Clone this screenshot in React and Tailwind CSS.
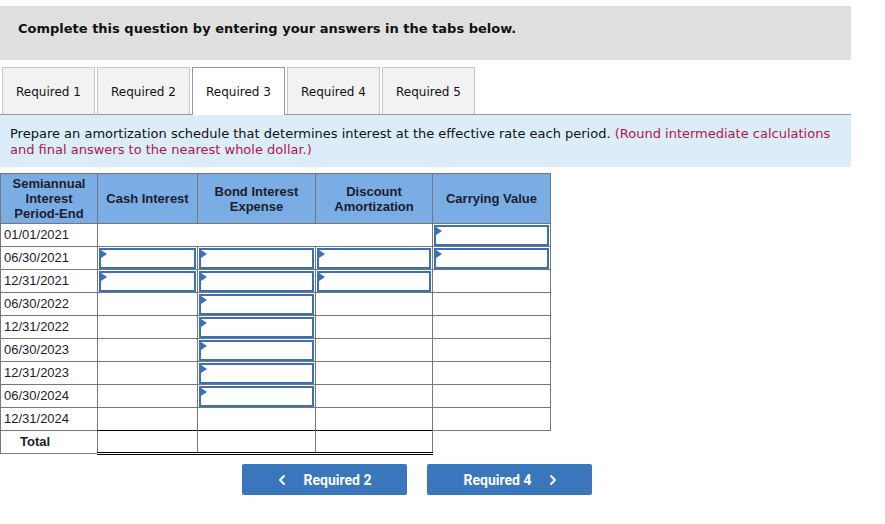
import { ChevronLeft, ChevronRight } from 'lucide-react';

const rows = [
    { date: '01/01/2021', inputs: [false, false, false, true] },
    { date: '06/30/2021', inputs: [true, true, true, true] },
    { date: '12/31/2021', inputs: [true, true, true, false] },
    { date: '06/30/2022', inputs: [false, true, false, false] },
    { date: '12/31/2022', inputs: [false, true, false, false] },
    { date: '06/30/2023', inputs: [false, true, false, false] },
    { date: '12/31/2023', inputs: [false, true, false, false] },
    { date: '06/30/2024', inputs: [false, true, false, false] },
    { date: '12/31/2024', inputs: [false, false, false, false] },
];

const tabs = ['Required 1', 'Required 2', 'Required 3', 'Required 4', 'Required 5'];

const InputCell = () => (
    <td className="border border-[#777] p-0 h-[23px]">
        <div className="relative h-[21px] mx-[1px] border-2 border-[#3b6fb6]">
            <span className="absolute left-0 top-0 w-0 h-0 border-y-[4px] border-y-transparent border-l-[6px] border-l-[#3b6fb6]"></span>
        </div>
    </td>
);

const App = () => {
    return (
        <div className="w-[885px] h-[524px] bg-white pt-[6px] font-['DejaVu_Sans',Verdana,sans-serif] text-[#111]">
            <div className="w-[851px] h-[54px] bg-[#e0e0e0] pl-[18px] pt-[14px]">
                <p className="text-[13px] font-bold leading-[18px]">Complete this question by entering your answers in the tabs below.</p>
            </div>

            <div className="flex gap-[2px] pl-[2px] mt-[7px] w-[851px]">
                {tabs.map((t, i) => (
                    <div
                        key={t}
                        className={
                            i === 2
                                ? 'w-[93px] h-[48px] flex items-center justify-center text-[12px] bg-white border border-[#999] border-b-0 -mb-[1px] relative z-10'
                                : 'w-[93px] h-[47px] flex items-center justify-center pt-[1px] text-[12px] bg-[#f2f2f2] border border-[#c6c6c6] border-b-0'
                        }
                    >
                        {t}
                    </div>
                ))}
            </div>

            <div className="w-[851px] h-[53px] bg-[#dbedf9] border-t border-[#999] px-[10px] pt-[11px] text-[13px] leading-[16px]">
                Prepare an amortization schedule that determines interest at the effective rate each period.{' '}
                <span className="text-[#b0174c]">(Round intermediate calculations and final answers to the nearest whole dollar.)</span>
            </div>

            <table className="mt-[6px] border-collapse font-['Liberation_Sans',Arial,sans-serif] text-[13px] table-fixed w-[550px]">
                <colgroup>
                    <col className="w-[97px]" />
                    <col className="w-[100px]" />
                    <col className="w-[118px]" />
                    <col className="w-[117px]" />
                    <col className="w-[118px]" />
                </colgroup>
                <thead>
                    <tr className="h-[50px] bg-[#7aade4] text-[#1c1c2e] leading-[15px]">
                        <th className="border border-[#777] font-bold px-[4px]">Semiannual<br />Interest<br />Period-End</th>
                        <th className="border border-[#777] font-bold">Cash Interest</th>
                        <th className="border border-[#777] font-bold px-2">Bond Interest Expense</th>
                        <th className="border border-[#777] font-bold">Discount Amortization</th>
                        <th className="border border-[#777] font-bold">Carrying Value</th>
                    </tr>
                </thead>
                <tbody>
                    {rows.map(r => (
                        <tr key={r.date} className="h-[23px]">
                            <td className="border border-[#777] pl-[3px] text-[#1c1c2e]">{r.date}</td>
                            {r.date === '01/01/2021' ? (
                                <>
                                    <td colSpan={3} className="border border-[#777]"></td>
                                    <InputCell />
                                </>
                            ) : (
                                r.inputs.map((inp, j) =>
                                    inp ? <InputCell key={j} /> : <td key={j} className="border border-[#777]"></td>
                                )
                            )}
                        </tr>
                    ))}
                    <tr className="h-[23px]">
                        <td className="border border-[#777] text-left font-bold text-[#1c1c2e] pl-[19px]">Total</td>
                        <td className="border-x border-x-[#777] border-t border-t-black border-b-[3px] border-b-black border-double"></td>
                        <td className="border-x border-x-[#777] border-t border-t-black border-b-[3px] border-b-black border-double"></td>
                        <td className="border-x border-x-[#777] border-t border-t-black border-b-[3px] border-b-black border-double"></td>
                        <td className="border-t border-t-[#777]"></td>
                    </tr>
                </tbody>
            </table>

            <div className="flex gap-[20px] pl-[242px] mt-[9px] font-['Roboto',sans-serif]">
                <button className="w-[165px] h-[31px] rounded-[2px] bg-[#3a76bb] text-white font-bold text-[14px] flex items-center justify-center gap-[14px] pt-[1px]">
                    <ChevronLeft size={16} strokeWidth={3} />
                    <span className="mr-[4px]">Required 2</span>
                </button>
                <button className="w-[165px] h-[31px] rounded-[2px] bg-[#3a76bb] text-white font-bold text-[14px] flex items-center justify-center gap-[14px] pt-[1px]">
                    <span className="ml-[6px]">Required 4</span>
                    <ChevronRight size={16} strokeWidth={3} />
                </button>
            </div>
        </div>
    );
};

export default App;
